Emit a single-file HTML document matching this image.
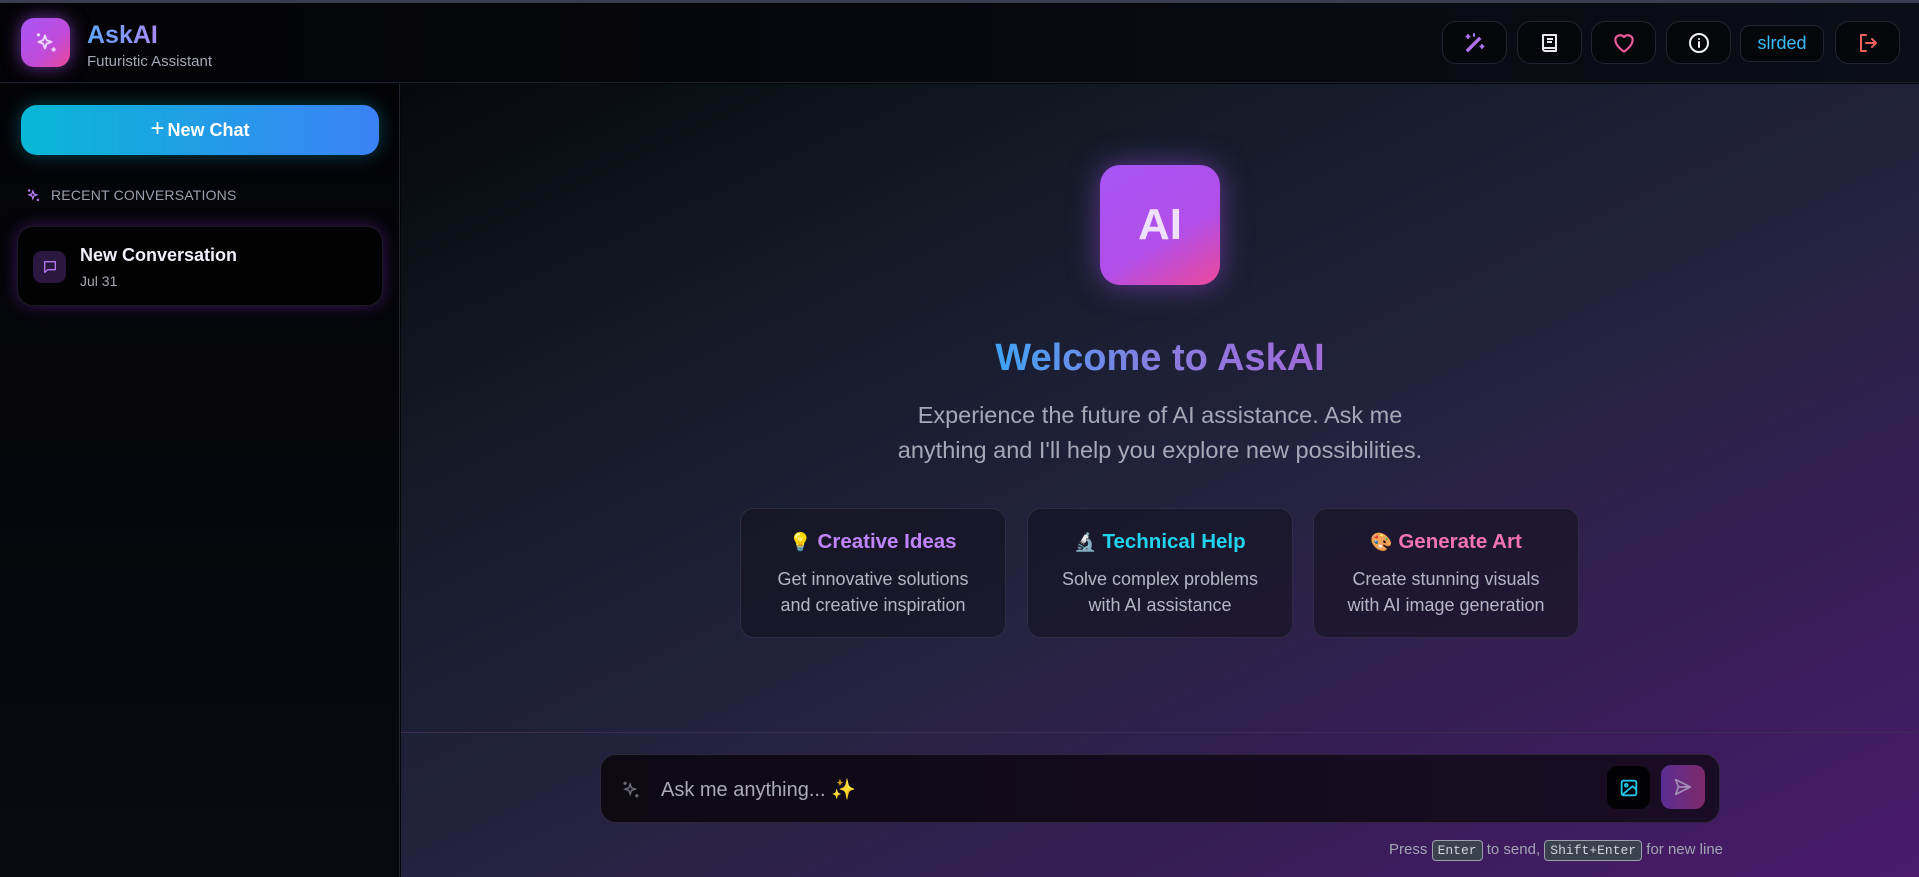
<!DOCTYPE html>
<html><head><meta charset="utf-8"><style>
*{box-sizing:border-box;margin:0;padding:0}
body{width:1919px;height:877px;overflow:hidden;background:#05060a;font-family:"Liberation Sans","Noto Sans CJK SC",sans-serif;position:relative;color:#fff}
.topline{position:absolute;left:0;top:0;width:1919px;height:3px;background:#3a3d52}
.header{position:absolute;left:0;top:3px;width:1919px;height:80px;background:linear-gradient(90deg,#030305,#0b0e18);border-bottom:1px solid #1e2130}
.logo{position:absolute;left:21px;top:15px;width:49px;height:49px;border-radius:13px;background:linear-gradient(135deg,#a855f7,#c04bd8 60%,#ec4899);box-shadow:0 0 18px rgba(168,85,247,.6);display:flex;align-items:center;justify-content:center}
.title{position:absolute;left:87px;top:18px;font-size:25px;font-weight:bold;background:linear-gradient(90deg,#60a5fa,#a78bfa);-webkit-background-clip:text;color:transparent}
.sub{position:absolute;left:87px;top:50px;font-size:15px;color:#a4a7b5}
.hb{position:absolute;top:18px;height:43px;width:65px;border-radius:14px;background:#06070b;border:1px solid #22252f;display:flex;align-items:center;justify-content:center}
.side{position:absolute;left:0;top:84px;width:400px;height:793px;background:linear-gradient(180deg,#040407,#080a10);border-right:1px solid #23252e}
.newchat{position:absolute;left:21px;top:21px;width:358px;height:50px;border-radius:16px;background:linear-gradient(90deg,#08b8d6,#3b82f6);box-shadow:0 0 18px rgba(6,182,212,.35);display:flex;align-items:center;justify-content:center;font-size:18px;font-weight:bold;color:#fff}
.recent{position:absolute;left:51px;top:103px;font-size:14px;color:#9ca0ae;letter-spacing:.2px}
.conv{position:absolute;left:17px;top:142px;width:366px;height:80px;border-radius:16px;background:#020203;box-shadow:0 0 16px rgba(147,51,234,.35);border:1px solid #1a1a22}
.ci{position:absolute;left:15px;top:24px;width:33px;height:32px;border-radius:9px;background:#2a1840;display:flex;align-items:center;justify-content:center}
.main{position:absolute;left:401px;top:84px;width:1518px;height:793px;background:linear-gradient(155deg,#06080c 0%,#131a26 25%,#252340 55%,#3a1d5a 80%,#4b1a6c 100%)}
.ailogo{position:absolute;left:699px;top:81px;width:120px;height:120px;border-radius:20px;background:linear-gradient(150deg,#a855f7,#b24ee8 60%,#ec4899);box-shadow:0 0 30px rgba(168,85,247,.5);display:flex;align-items:center;justify-content:center;font-size:44px;font-weight:bold;color:#f0e0ff}
.wel{position:absolute;left:0;width:1518px;top:253px;text-align:center;font-size:38px;font-weight:bold}
.wel span{background:linear-gradient(90deg,#3fa3f5,#8a7ce0,#a06ad8);-webkit-background-clip:text;color:transparent}
.desc{position:absolute;left:0;width:1518px;top:314px;text-align:center;font-size:23.5px;line-height:35px;color:#a6a8b8}
.card{position:absolute;top:424px;width:266px;height:130px;border-radius:14px;background:rgba(18,16,30,.55);border:1px solid #2e2c40;text-align:center}
.card h3{font-size:20.5px;margin-top:21px;font-weight:bold}
.card p{font-size:18px;line-height:26px;color:#b4b6c4;margin-top:12px}
.bottom{position:absolute;left:0;top:648px;width:1518px;height:145px;border-top:1px solid #3a2c52}
.input{position:absolute;left:199px;top:21px;width:1120px;height:69px;border-radius:16px;background:linear-gradient(90deg,#0d0a14,#1a0c24);border:1px solid #2c2638}
.ph{position:absolute;left:60px;top:22px;font-size:20px;color:#a9aab7}
.imgb{position:absolute;left:1006px;top:11px;width:43px;height:43px;border-radius:10px;background:#020204;display:flex;align-items:center;justify-content:center}
.send{position:absolute;left:1060px;top:10px;width:44px;height:44px;border-radius:10px;background:linear-gradient(90deg,#5a2d92,#7e2a6a);display:flex;align-items:center;justify-content:center}
.hint{position:absolute;right:196px;top:108px;font-size:15px;color:#a3a5b3}
kbd{font-family:"Liberation Mono",monospace;font-size:13px;background:#3a414f;border:1px solid #9aa0ac;border-radius:4px;padding:2px 5px;color:#d0d4dc}
</style></head><body>
<div class="topline"></div>
<div class="header">
 <div class="logo"><svg width="26" height="26" viewBox="0 0 24 24" fill="none" stroke="#e9d5ff" stroke-width="1.8" stroke-linejoin="round"><path d="M11 5l1.6 4.4L17 11l-4.4 1.6L11 17l-1.6-4.4L5 11l4.4-1.6z"/><path d="M5 3v3M3.5 4.5h3M19 16v4M17 18h4"/></svg></div>
 <div class="title">AskAI</div>
 <div class="sub">Futuristic Assistant</div>
 <div class="hb" style="left:1442px"><svg width="24" height="24" viewBox="0 0 24 24" fill="none" stroke="#b072f0" stroke-width="2" stroke-linecap="round"><path d="M5 20L17 8l-1-1L4 19z"/><path d="M5 4v3M3.5 5.5h3M19 14v3M17.5 15.5h3M11 3v2"/></svg></div>
 <div class="hb" style="left:1517px"><svg width="24" height="24" viewBox="0 0 24 24" fill="none" stroke="#e8e8ee" stroke-width="2" stroke-linejoin="round"><path d="M5 4h13v16H7a2 2 0 0 1-2-2z M5 17h13"/><path d="M9 8h6M9 11h5"/></svg></div>
 <div class="hb" style="left:1591px"><svg width="26" height="26" viewBox="0 0 24 24" fill="none" stroke="#ec5b9e" stroke-width="2" stroke-linejoin="round"><path d="M12 20s-8-5-8-11a4.5 4.5 0 0 1 8-2.5A4.5 4.5 0 0 1 20 9c0 6-8 11-8 11z"/></svg></div>
 <div class="hb" style="left:1666px"><svg width="24" height="24" viewBox="0 0 24 24" fill="none" stroke="#f2f2f5" stroke-width="2" stroke-linecap="round"><circle cx="12" cy="12" r="9"/><path d="M12 11v5M12 8h.01"/></svg></div>
 <div class="hb" style="left:1740px;top:22px;height:37px;width:84px;border-radius:10px;font-size:18px;color:#38bdf8">slrded</div>
 <div class="hb" style="left:1835px"><svg width="24" height="24" viewBox="0 0 24 24" fill="none" stroke="#f0605f" stroke-width="2" stroke-linecap="round" stroke-linejoin="round"><path d="M10 4H5v16h5M10 12h10M16 8l4 4-4 4"/></svg></div>
</div>
<div class="side">
 <div class="newchat"><span style="font-weight:normal;font-size:24px;margin-right:3px;margin-top:-3px">+</span>New Chat</div>
 <svg style="position:absolute;left:26px;top:104px" width="15" height="15" viewBox="0 0 24 24" fill="none" stroke="#b77cf0" stroke-width="2.2"><path d="M11 5l1.6 4.4L17 11l-4.4 1.6L11 17l-1.6-4.4L5 11l4.4-1.6z"/><path d="M5 2v4M3 4h4M19 17v4M17 19h4"/></svg>
 <div class="recent">RECENT CONVERSATIONS</div>
 <div class="conv">
  <div class="ci"><svg width="16" height="16" viewBox="0 0 24 24" fill="none" stroke="#b277ee" stroke-width="2" stroke-linejoin="round"><path d="M4 4h16v12H9l-5 4z"/></svg></div>
  <div style="position:absolute;left:62px;top:18px;font-size:18px;font-weight:bold;color:#f2eefa">New Conversation</div>
  <div style="position:absolute;left:62px;top:46px;font-size:14px;color:#a5a7b2">Jul 31</div>
 </div>
</div>
<div class="main">
 <div class="ailogo">AI</div>
 <div class="wel"><span>Welcome to AskAI</span></div>
 <div class="desc">Experience the future of AI assistance. Ask me<br>anything and I'll help you explore new possibilities.</div>
 <div class="card" style="left:339px"><h3><span style="font-size:18px">💡</span> <span style="color:#c084fc">Creative Ideas</span></h3><p>Get innovative solutions<br>and creative inspiration</p></div>
 <div class="card" style="left:626px"><h3><span style="font-size:18px">🔬</span> <span style="color:#22d3ee">Technical Help</span></h3><p>Solve complex problems<br>with AI assistance</p></div>
 <div class="card" style="left:912px"><h3><span style="font-size:18px">🎨</span> <span style="color:#f472b6">Generate Art</span></h3><p>Create stunning visuals<br>with AI image generation</p></div>
 <div class="bottom">
  <div class="input">
   <svg style="position:absolute;left:20px;top:25px" width="20" height="20" viewBox="0 0 24 24" fill="none" stroke="#6b6d7a" stroke-width="1.8"><path d="M11 5l1.6 4.4L17 11l-4.4 1.6L11 17l-1.6-4.4L5 11l4.4-1.6z"/><path d="M5 2v4M3 4h4M19 17v4M17 19h4"/></svg>
   <div class="ph">Ask me anything... ✨</div>
   <div class="imgb"><svg width="22" height="22" viewBox="0 0 24 24" fill="none" stroke="#22c5e8" stroke-width="2" stroke-linejoin="round"><rect x="4" y="4" width="16" height="16" rx="2"/><circle cx="9" cy="9" r="1.5"/><path d="M20 14l-4-4-12 10"/></svg></div>
   <div class="send"><svg width="22" height="22" viewBox="0 0 24 24" fill="none" stroke="#a58db8" stroke-width="1.8" stroke-linejoin="round"><path d="M4 4l16 8-16 8 3-8z M7 12h13"/></svg></div>
  </div>
  <div class="hint">Press <kbd>Enter</kbd> to send, <kbd>Shift+Enter</kbd> for new line</div>
 </div>
</div>
</body></html>
